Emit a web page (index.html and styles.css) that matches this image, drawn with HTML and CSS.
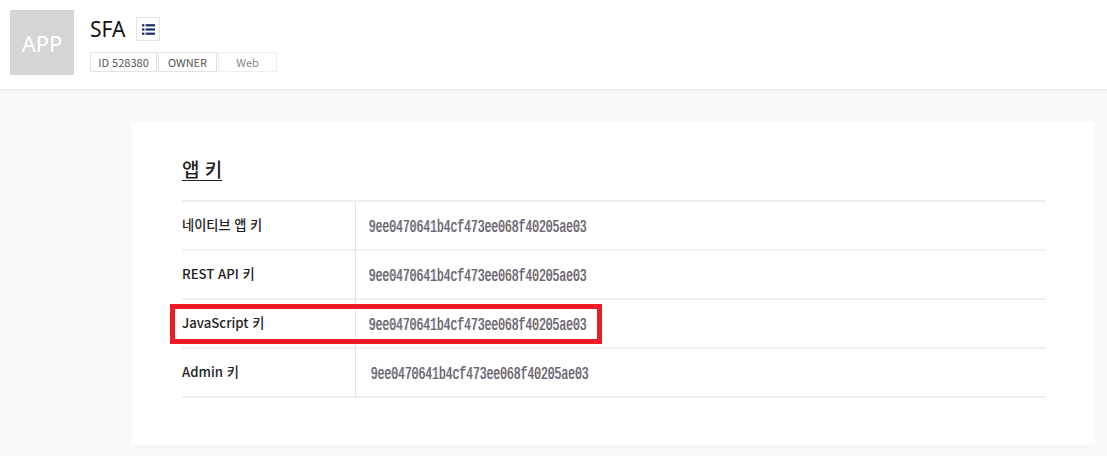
FILE: index.html
```html
<!DOCTYPE html>
<html lang="ko">
<head>
<meta charset="utf-8">
<title>SFA</title>
<link rel="stylesheet" href="styles.css">
</head>
<body>
<header class="app-header">
  <div class="app-thumb">APP</div>
  <div class="app-info">
    <div class="app-title-row">
      <h1 class="app-title">SFA</h1>
      <button class="list-btn" type="button" aria-label="목록">
        <svg width="13" height="11" viewBox="0 0 13 11" aria-hidden="true">
          <rect x="0" y="0.2" width="2.4" height="2.2" fill="#1a2a6c"/>
          <rect x="3.6" y="0.2" width="9.4" height="2.2" fill="#1a2a6c"/>
          <rect x="0" y="4.4" width="2.4" height="2.2" fill="#1a2a6c"/>
          <rect x="3.6" y="4.4" width="9.4" height="2.2" fill="#1a2a6c"/>
          <rect x="0" y="8.6" width="2.4" height="2.2" fill="#1a2a6c"/>
          <rect x="3.6" y="8.6" width="9.4" height="2.2" fill="#1a2a6c"/>
        </svg>
      </button>
    </div>
    <div class="tags">
      <span class="tag">ID 528380</span>
      <span class="tag">OWNER</span>
      <span class="tag tag-light">Web</span>
    </div>
  </div>
</header>
<main class="content">
  <section class="card">
    <h2 class="card-title">앱 키</h2>
    <div class="keys">
      <div class="key-row"><div class="key-name">네이티브 앱 키</div><div class="key-value"><span class="key-text">9ee0470641b4cf473ee068f40205ae03</span></div></div>
      <div class="key-row"><div class="key-name">REST API 키</div><div class="key-value"><span class="key-text">9ee0470641b4cf473ee068f40205ae03</span></div></div>
      <div class="key-row"><div class="key-name">JavaScript 키</div><div class="key-value"><span class="key-text">9ee0470641b4cf473ee068f40205ae03</span></div></div>
      <div class="key-row"><div class="key-name">Admin 키</div><div class="key-value key-shift"><span class="key-text">9ee0470641b4cf473ee068f40205ae03</span></div></div>
    </div>
    <div class="highlight"></div>
  </section>
</main>
</body>
</html>
```
FILE: styles.css
```css
* { box-sizing: border-box; }
html, body { margin: 0; height: 100%; }
body {
  background: #f7f8f8;
  font-family: "Noto Sans CJK KR", "Noto Sans", sans-serif;
  color: #222;
  overflow: hidden;
}
.app-header {
  height: 91px;
  background: #fff;
  border-bottom: 2px solid #eeeeee;
  display: flex;
  padding: 10px 10px 0;
}
.app-thumb {
  width: 64px;
  height: 65px;
  background: #d5d5d5;
  color: #fff;
  font-size: 22px;
  line-height: 67px;
  text-align: center;
  font-family: "Noto Sans", sans-serif;
}
.app-info { margin-left: 16px; }
.app-title-row {
  display: flex;
  align-items: center;
  height: 32px;
  margin-top: 3px;
}
.app-title {
  margin: 0;
  font-size: 21px;
  font-weight: 400;
  line-height: 32px;
  color: #111;
  font-family: "Noto Sans", sans-serif;
}
.list-btn {
  width: 24px;
  height: 24px;
  margin-left: 11px;
  padding: 0;
  background: #fff;
  border: 1px solid #e6e6e6;
  display: flex;
  align-items: center;
  justify-content: center;
}
.tags { display: flex; gap: 1px; margin-top: 7px; }
.tag {
  height: 20px;
  border: 1px solid #e2e2e2;
  font-size: 11px;
  line-height: 18px;
  color: #555;
  text-align: center;
  white-space: nowrap;
  padding: 0;
  width: 59px;
  font-family: "Noto Sans CJK KR", "Noto Sans", sans-serif;
}
.tag:first-child { width: 67px; }
.tag-light { color: #888; border-color: #efefef; }
.content { padding: 31px 12px 0 132px; }
.card {
  position: relative;
  background: #fff;
  height: 323px;
  padding: 35px 49px 0 50px;
}
.card-title {
  margin: 0 0 19px;
  font-size: 19px;
  font-weight: 500;
  line-height: 24px;
  height: 24px;
  color: #222;
  text-decoration: underline;
  text-underline-offset: 3px;
}
.keys { border-top: 2px solid #f0f0f0; }
.key-row {
  display: flex;
  height: 49px;
  border-bottom: 2px solid #f0f0f0;
}
.key-name {
  width: 174px;
  border-right: 1px solid #e2e2e2;
  margin-bottom: -2px;
  font-size: 13.2px;
  font-weight: 500;
  line-height: 46px;
  color: #222;
}
.key-value {
  padding-left: 13px;
  line-height: 47px;
  white-space: nowrap;
}
.key-text {
  display: inline-block;
  font-family: "Liberation Mono", monospace;
  font-size: 18px;
  color: #667;
  transform: scaleX(0.63);
  transform-origin: left center;
  filter: blur(0.7px);
  text-shadow: 1px 0 0 rgba(200, 130, 20, 0.5), -1px 0 0 rgba(40, 80, 190, 0.5);
}
.key-shift { padding-left: 15px; }
.highlight {
  position: absolute;
  left: 38px;
  top: 182px;
  width: 432px;
  height: 40px;
  border: 5px solid #ed1c24;
  pointer-events: none;
}
```
